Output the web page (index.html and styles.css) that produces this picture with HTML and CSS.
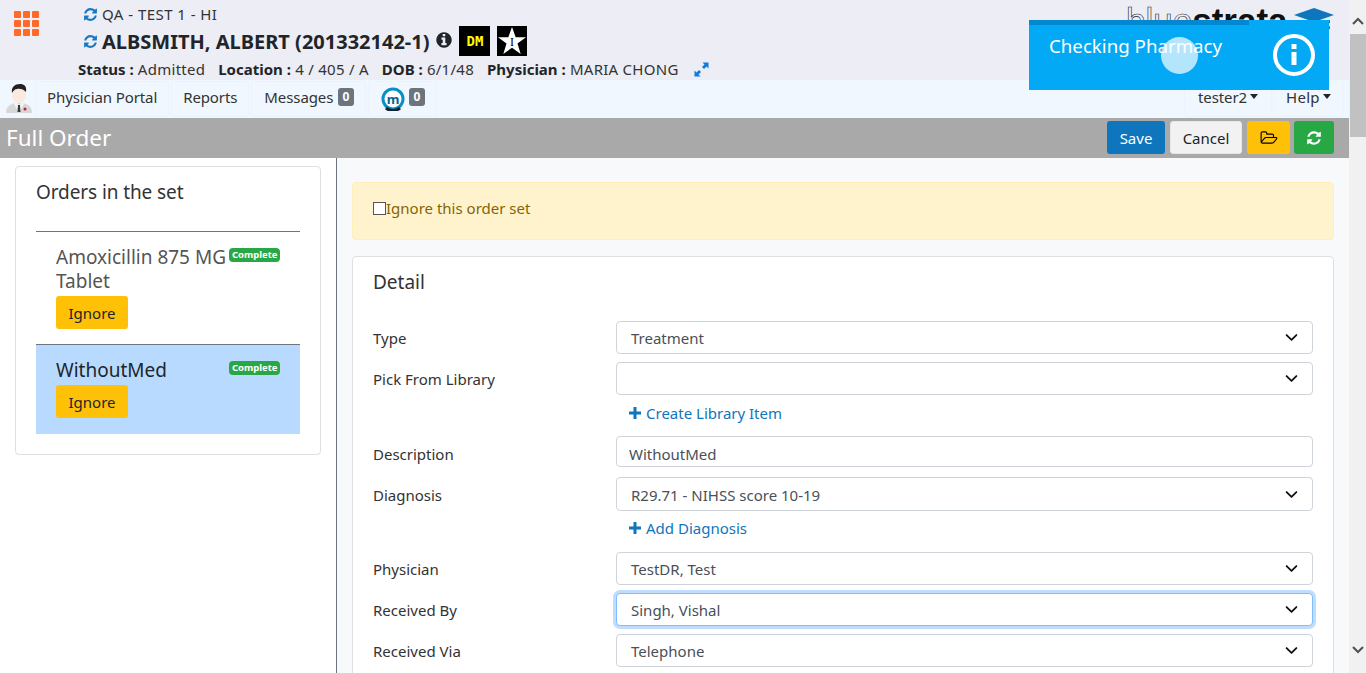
FILE: index.html
```html
<!DOCTYPE html>
<html>
<head>
	<title>Full Order</title>
	<link rel="stylesheet" href="styles.css">
</head>
<body>
<svg class="defs" width="0" height="0">
	<symbol id="i-sync" viewBox="0 0 1792 1792"><path d="M1639 1056q0 5-1 7-64 268-268 434.5t-478 166.5q-146 0-282.5-55t-243.5-157l-129 129q-19 19-45 19t-45-19-19-45v-448q0-26 19-45t45-19h448q26 0 45 19t19 45-19 45l-137 137q71 66 161 102t187 36q134 0 250-65t186-179q11-17 53-117 8-23 30-23h192q13 0 22.5 9.5t9.5 22.5zm25-800v448q0 26-19 45t-45 19h-448q-26 0-45-19t-19-45 19-45l138-138q-148-137-349-137-134 0-250 65t-186 179q-11 17-53 117-8 23-30 23h-199q-13 0-22.5-9.5t-9.5-22.5v-7q65-268 270-434.5t480-166.5q146 0 284 55.5t245 156.5l130-129q19-19 45-19t45 19 19 45z"/></symbol>
	<symbol id="i-info" viewBox="0 0 1792 1792"><path d="M1152 1376v-160q0-14-9-23t-23-9h-96v-512q0-14-9-23t-23-9h-320q-14 0-23 9t-9 23v160q0 14 9 23t23 9h96v320h-96q-14 0-23 9t-9 23v160q0 14 9 23t23 9h448q14 0 23-9t9-23zm-128-896v-160q0-14-9-23t-23-9h-192q-14 0-23 9t-9 23v160q0 14 9 23t23 9h192q14 0 23-9t9-23zm640 416q0 209-103 385.5t-279.5 279.5-385.5 103-385.5-103-279.5-279.5-103-385.5 103-385.5 279.5-279.5 385.5-103 385.5 103 279.5 279.5 103 385.5z"/></symbol>
	<symbol id="i-chev" viewBox="0 0 16 16"><path d="M2 5l6 6 6-6" fill="none" stroke="currentColor" stroke-width="2.2" stroke-linecap="round" stroke-linejoin="round"/></symbol>
	<symbol id="i-plus" viewBox="0 0 12 12"><path d="M4.500 0h3v4.500H12v3H7.500V12h-3V7.500H0v-3h4.500z"/></symbol>
</svg>

<div class="page">
	<div class="main">
		<div class="header">
			<div class="apps">
				<i></i><i></i><i></i><i></i><i></i><i></i><i></i><i></i><i></i>
			</div>
			<div class="patient">
				<div class="site"><svg class="sync"><use href="#i-sync"/></svg><span>QA - TEST 1 - HI</span></div>
				<div class="name">
					<svg class="sync"><use href="#i-sync"/></svg>
					<span>ALBSMITH, ALBERT (201332142-1)</span>
					<svg class="name-info"><use href="#i-info"/></svg>
					<span class="tag tag-dm">DM</span>
					<span class="tag">
						<svg width="30" height="30" viewBox="0 0 30 30"><path d="M15 1l3.700 10.200H29l-8.500 6.400 3.200 10.400L15 21.700 6.300 28l3.200-10.400L1 11.200h10.300z" fill="#fff"/><text x="15" y="20" text-anchor="middle" class="star-text">I</text></svg>
					</span>
				</div>
				<div class="facts">
					<span><b>Status :</b> Admitted</span>
					<span><b>Location :</b> 4 / 405 / A</span>
					<span><b>DOB :</b> 6/1/48</span>
					<span><b>Physician :</b> MARIA CHONG</span>
					<svg class="expand" width="15" height="15" viewBox="0 0 15 15"><path d="M8.500 0.500h6v6l-2-2-2.500 2.500-2-2 2.500-2.500zM6.500 14.500h-6v-6l2 2 2.500-2.500 2 2-2.500 2.500z"/></svg>
				</div>
			</div>
			<div class="logo"><span class="logo-thin">blue</span><span class="logo-bold">strata</span>
				<svg width="40" height="32" viewBox="0 0 40 32"><path d="M20 0l20 7-20 7L0 7z" fill="#0f75bc"/><path d="M36 12l-16 6-16-6v3l16 6 16-6zM36 18l-16 6-16-6v3l16 6 16-6z" fill="#0f75bc"/></svg>
			</div>
		</div>

		<div class="nav">
			<svg class="doctor" width="28" height="32" viewBox="0 0 28 32">
				<path d="M1 31c0-7 5-10 13-10s13 3 13 10z" fill="#d5d7d8"/>
				<path d="M11 20l3 3 3-3 2 2-5 9-5-9z" fill="#f4f4f4"/>
				<path d="M13 23h2l.5 7h-3z" fill="#3a3a3a"/>
				<circle cx="20" cy="27" r="1.500" fill="#c8202a"/>
				<ellipse cx="14" cy="13" rx="7" ry="8" fill="#fbe9e0"/>
				<path d="M7 11c-1-6 3-9 8-9 4 0 7 2 6 8-2-3-7-4-9-3-2 0-4 2-5 4z" fill="#222"/>
			</svg>
			<a class="nav-item">Physician Portal</a>
			<a class="nav-item">Reports</a>
			<a class="nav-item nav-msg">Messages <span class="count">0</span></a>
			<a class="nav-item nav-m">
				<svg width="24" height="24" viewBox="0 0 24 24"><circle cx="12" cy="12" r="10" fill="#fff" stroke="#0a8fc4" stroke-width="3"/><path d="M5 21a11 11 0 0 0 14 0" fill="none" stroke="#123" stroke-width="3"/><text x="12" y="16.500" text-anchor="middle" class="m-text">m</text></svg>
				<span class="count">0</span>
			</a>
			<a class="nav-item nav-right">tester2<i class="caret"></i></a>
			<a class="nav-item nav-help">Help<i class="caret"></i></a>
		</div>

		<div class="titlebar">
			<h1>Full Order</h1>
			<div class="actions">
				<button class="btn btn-save">Save</button>
				<button class="btn btn-cancel">Cancel</button>
				<button class="btn btn-open">
					<svg width="18" height="16" viewBox="0 0 2048 1792"><path d="M1845 931q0-35-53-35h-1088q-40 0-85.500 21.500t-71.500 52.500l-294 363q-18 24-18 40 0 35 53 35h1088q40 0 86-22t71-53l294-363q18-22 18-39zm-1141-163h768v-160q0-40-28-68t-68-28h-576q-40 0-68-28t-28-68v-64q0-40-28-68t-68-28h-320q-40 0-68 28t-28 68v853l256-315q44-53 116-87.500t140-34.500zm1269 163q0 62-46 120l-295 363q-43 53-116 87.500t-140 34.500h-1088q-92 0-158-66t-66-158v-960q0-92 66-158t158-66h320q92 0 158 66t66 158v32h544q92 0 158 66t66 158v160h192q54 0 99 24.500t67 70.500q15 32 15 68z"/></svg>
				</button>
				<button class="btn btn-refresh"><svg width="16" height="16"><use href="#i-sync"/></svg></button>
			</div>
		</div>

		<div class="content">
			<div class="left">
				<div class="card set-card">
					<h2>Orders in the set</h2>
					<div class="order order-first">
						<div class="order-top">
							<span class="order-name">Amoxicillin 875 MG Tablet</span>
							<span class="badge">Complete</span>
						</div>
						<button class="btn btn-ignore">Ignore</button>
					</div>
					<div class="order order-active">
						<div class="order-top">
							<span class="order-name">WithoutMed</span>
							<span class="badge">Complete</span>
						</div>
						<button class="btn btn-ignore">Ignore</button>
					</div>
				</div>
			</div>

			<div class="right">
				<div class="alert"><span class="check"></span>Ignore this order set</div>
				<div class="card detail">
					<h2>Detail</h2>
					<div class="row"><label>Type</label><div class="select">Treatment<svg><use href="#i-chev"/></svg></div></div>
					<div class="row"><label>Pick From Library</label><div class="select"><svg><use href="#i-chev"/></svg></div></div>
					<div class="row-link"><a><svg><use href="#i-plus"/></svg>Create Library Item</a></div>
					<div class="row row-low"><label>Description</label><div class="input">WithoutMed</div></div>
					<div class="row row-low"><label>Diagnosis</label><div class="select tall">R29.71 - NIHSS score 10-19<svg><use href="#i-chev"/></svg></div></div>
					<div class="row-link row-link-up"><a><svg><use href="#i-plus"/></svg>Add Diagnosis</a></div>
					<div class="row"><label>Physician</label><div class="select">TestDR, Test<svg><use href="#i-chev"/></svg></div></div>
					<div class="row"><label>Received By</label><div class="select focus">Singh, Vishal<svg><use href="#i-chev"/></svg></div></div>
					<div class="row"><label>Received Via</label><div class="select">Telephone<svg><use href="#i-chev"/></svg></div></div>
				</div>
			</div>
		</div>
	</div>

	<div class="scrollbar">
		<svg class="sb-arrow" width="12" height="8" viewBox="0 0 12 8"><path d="M1 7l5-5 5 5" fill="none" stroke="#505050" stroke-width="2"/></svg>
		<div class="sb-thumb"></div>
		<svg class="sb-arrow sb-down" width="12" height="8" viewBox="0 0 12 8"><path d="M1 1l5 5 5-5" fill="none" stroke="#505050" stroke-width="2"/></svg>
	</div>
</div>

<div class="toast">
	<div class="toast-progress"></div>
	<div class="toast-text">Checking Pharmacy</div>
	<svg class="toast-icon" width="42" height="42" viewBox="0 0 42 42"><circle cx="21" cy="21" r="19" fill="none" stroke="#fff" stroke-width="4"/><rect x="18.500" y="18" width="5" height="13" fill="#fff"/><rect x="18.500" y="10" width="5" height="5" fill="#fff"/></svg>
	<div class="ripple"></div>
</div>
</body>
</html>
```
FILE: styles.css
```css
* { box-sizing: border-box; }
html, body { height: 100%; }
body { margin: 0; overflow: hidden; background: #fff; color: #212529; font-family: "Noto Sans", sans-serif; font-size: 15px; }
.defs { display: block; height: 0; }
.page { display: flex; height: 673px; }
.main { flex: 1; min-width: 0; height: 673px; overflow: hidden; }

/* header */
.header { height: 80px; background: #ecedf5; display: flex; }
.apps { width: 25px; height: 25px; margin: 11px 0 0 14px; display: grid; grid-template-columns: repeat(3, 7px); gap: 2px; }
.apps i { background: #ff6a28; border-radius: 1px; height: 7px; }
.patient { margin-left: 39px; padding-top: 5px; flex: 1; }
.site { margin-left: 5px; height: 19px; line-height: 19px; font-size: 15px; letter-spacing: .45px; color: #333; display: flex; align-items: center; }
.sync { width: 15px; height: 15px; fill: #1a78c2; margin-right: 4px; flex: none; }
.name { margin-left: 5px; margin-top: 2px; height: 30px; font-size: 20px; font-weight: 700; display: flex; align-items: center; color: #212529; white-space: nowrap; }
.name-info { width: 18px; height: 18px; fill: #212529; margin: 0 6px 2px 6px; flex: none; }
.tag { width: 31px; height: 30px; background: #000; margin-right: 7px; display: flex; align-items: center; justify-content: center; color: #ffff00; font: 700 14px "DejaVu Sans Mono", monospace; }
.tag:last-child { width: 30px; margin-right: 0; }
.tag svg { display: block; }
.star-text { font: 400 12px "Liberation Serif", serif; fill: #000; }
.facts { margin-top: 2px; height: 22px; line-height: 22px; font-size: 15px; letter-spacing: .27px; display: flex; align-items: center; gap: 13px; color: #333; white-space: nowrap; }
.facts b { color: #212529; letter-spacing: 0; }
.expand { fill: #0b7de0; flex: none; margin-left: 2px; }
.logo { width: 223px; height: 80px; padding-top: 4px; display: flex; font-size: 35px; line-height: 34px; color: #111; white-space: nowrap; font-family: "Liberation Sans", sans-serif; }
.logo-thin { color: #ecedf5; -webkit-text-stroke: .6px #222; }
.logo-bold { font-weight: 700; }
.logo svg { margin: 4px 0 0 6px; flex: none; }

/* nav */
.nav { height: 38px; background: #f0f7ff; display: flex; align-items: center; gap: 2px; padding: 0 5px; }
.doctor { flex: none; margin-bottom: 2px; }
.nav-item { height: 36px; display: flex; align-items: center; padding: 0 11px 5px; border: 1px solid #ebf3fc; border-radius: 3px; color: #333; white-space: nowrap; letter-spacing: -.1px; }
.nav-msg { padding-left: 12px; white-space: pre; }
.nav-m { padding: 0 11px 5px 12px; }
.nav-m svg { margin-top: 4px; }
.nav-right { margin-left: auto; width: 88px; padding-left: 13px; gap: 3px; }
.nav-help { width: 71px; margin-left: -1px; padding-left: 12px; gap: 3px; letter-spacing: .3px; }
.count { background: #6c757d; color: #fff; font-size: 12px; font-weight: 700; padding: 2px 4.500px; border-radius: 3px; margin: 1px 0 0 1px; line-height: 14px; letter-spacing: 0; }
.nav-m .count { margin-left: 4px; }
.m-text { font: 700 13px "Noto Sans", sans-serif; fill: #0a5f8a; }
.caret { width: 0; height: 0; margin-left: 0; border-top: 5px solid #212529; border-left: 4px solid transparent; border-right: 4px solid transparent; }

/* title */
.titlebar { height: 40px; background: #a9a9a9; display: flex; align-items: flex-start; padding: 3px 15px 0 6px; }
.titlebar h1 { margin: 0; font-size: 22.500px; line-height: 33px; font-weight: 400; color: #fff; }
.actions { margin-left: auto; display: flex; gap: 5px; }
.btn { height: 33px; border: 1px solid transparent; border-radius: 3px; font: inherit; padding: 0; display: flex; align-items: center; justify-content: center; }
.btn-save { width: 58px; background: #0f75bc; color: #fff; }
.btn-cancel { width: 72px; background: #f2f2f2; color: #212529; border-color: #e6e6e6; }
.btn-open { width: 43px; background: #ffc107; }
.btn-refresh { width: 40px; background: #28a745; fill: #fff; margin-left: -1px; }

/* content */
.content { display: flex; height: 515px; }
.left { width: 337px; flex: none; border-right: 1px solid #6c757d; padding: 8px 15px 0; }
.right { flex: 1; background: #f8f9fa; padding: 24px 15px 0; }
.card { background: #fff; border: 1px solid #dfdfdf; border-radius: 4px; }
h2 { margin: 0; font-size: 19px; font-weight: 400; color: #333; }
.set-card { width: 306px; height: 289px; padding: 12px 20px 0; }
.set-card h2 { height: 52px; line-height: 26px; letter-spacing: -.1px; border-bottom: 1px solid #6c757d; box-sizing: content-box; }
.order { padding: 13px 20px 0; }
.order + .order { border-top: 1px solid #6c757d; }
.order-first { height: 112px; }
.order-active { background: #b8daff; height: 90px; }
.order-top { display: flex; align-items: flex-start; justify-content: space-between; }
.order-name { width: 173px; flex: none; font-size: 19px; line-height: 24px; color: #555; }
.order-active .order-name { color: #212529; }
.badge { background: #28a745; color: #fff; font-size: 9.500px; font-weight: 700; line-height: 14px; padding: 0 2.500px; border-radius: 4px; margin-top: 3px; white-space: nowrap; }
.btn-ignore { width: 72px; background: #ffc107; color: #212529; margin-top: 3px; }

.alert { height: 58px; background: #fff3cd; border: 1px solid #ffeeba; border-radius: 4px; color: #856404; display: flex; align-items: flex-start; padding: 15px 0 0 20px; margin-bottom: 16px; }
.check { width: 13px; height: 13px; border: 1px solid #555; background: #fff; margin-top: 4px; }

.detail { padding: 12px 20px 0; height: 600px; }
.detail h2 { height: 52px; line-height: 27px; }
.row { display: flex; align-items: center; margin-bottom: 8px; }
.row label { width: 243px; flex: none; color: #333; }
.row-low label { padding-top: 2px; }
.select, .input { flex: 1; height: 33px; border: 1px solid #ced4da; border-radius: 4px; background: #fff; color: #495057; display: flex; align-items: center; padding-left: 14px; }
.select.tall { height: 34px; padding-top: 2px; }
.input { height: 31px; padding: 5px 0 0 12px; margin-bottom: 2px; }
.select svg { width: 13px; height: 13px; margin-left: auto; margin-right: 14px; color: #111; }
.select.tall svg { margin-top: -2px; }
.select.focus { border-color: #80bdff; box-shadow: 0 0 0 3px rgba(0, 123, 255, .25); }
.row-link { height: 33px; margin-top: -8px; margin-bottom: 8px; padding: 6px 0 0 256px; line-height: 24px; }
.row-link-up { padding-top: 5px; }
.row-link a { color: #0f75bc; display: inline-flex; align-items: center; }
.row-link svg { width: 12px; height: 12px; fill: #0f75bc; margin-right: 5px; }

/* scrollbar */
.scrollbar { width: 17px; flex: none; background: #f1f1f1; display: flex; flex-direction: column; align-items: center; padding-top: 17px; }
.sb-thumb { width: 16px; height: 103px; margin-top: 9px; background: #c1c1c1; }
.sb-down { margin-top: auto; margin-bottom: 19px; }

/* toast over the header */
.toast { position: absolute; left: 1029px; top: 20px; width: 300px; height: 70px; background: #03a9f4; color: #fff; }
.toast-progress { position: absolute; left: 0; top: 0; width: 220px; height: 5px; background: #0288d1; }
.toast-text { position: absolute; left: 20px; top: 13px; font-size: 18.700px; }
.toast-icon { position: absolute; left: 244px; top: 14px; }
.ripple { position: absolute; left: 132px; top: 17px; width: 37px; height: 37px; border-radius: 50%; background: rgba(255, 255, 255, .7); }
```
